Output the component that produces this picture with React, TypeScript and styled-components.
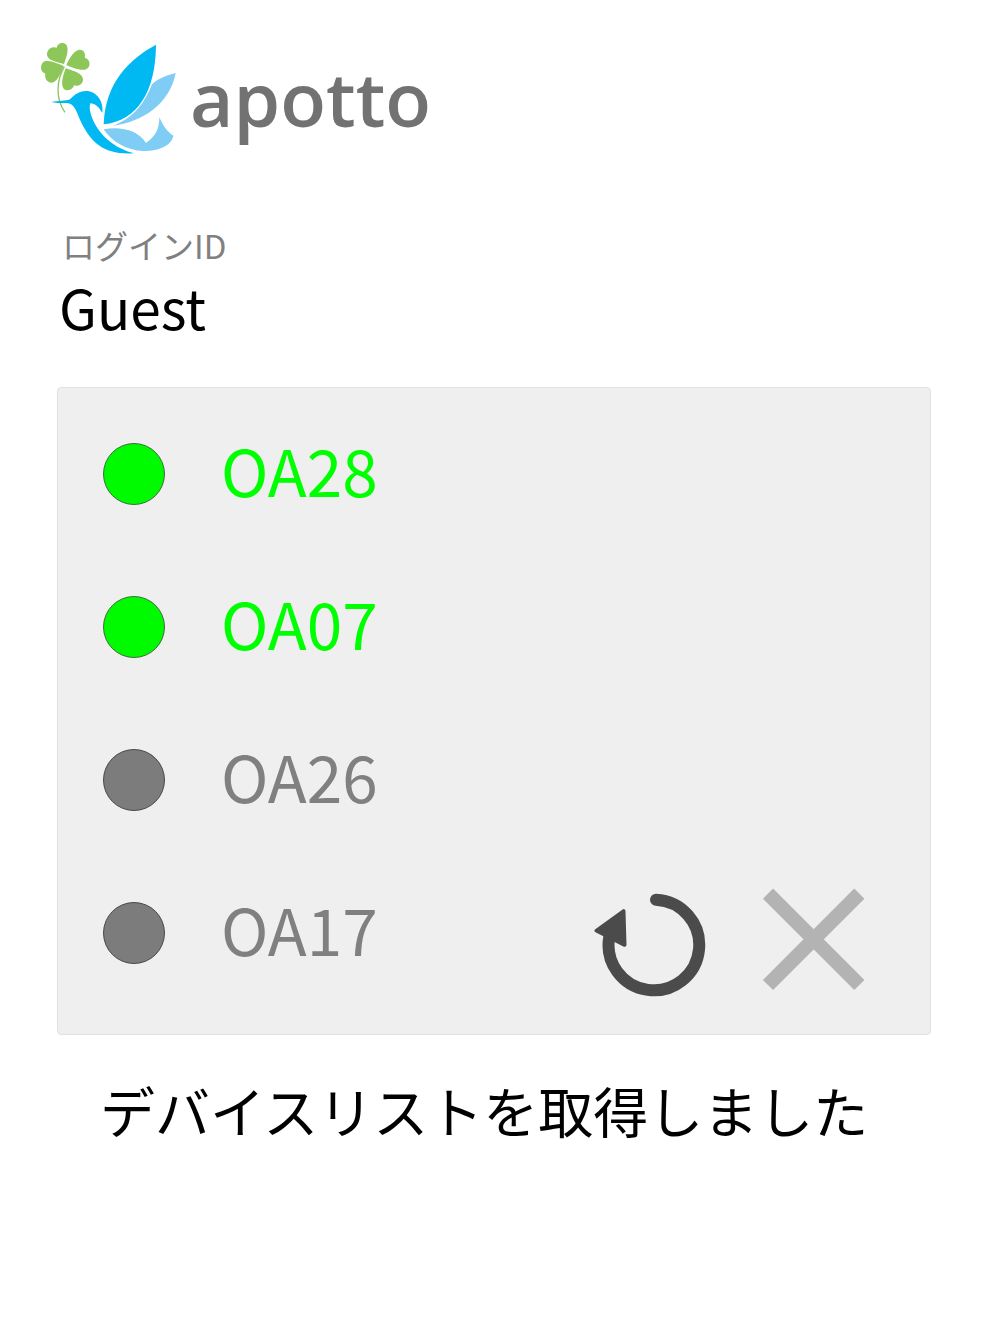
import React from "react";
import styled, { createGlobalStyle } from "styled-components";

const GlobalStyle = createGlobalStyle`
  body {
    margin: 0;
    background: #ffffff;
    color: #000000;
    font-family: "Noto Sans CJK JP", "Noto Sans", sans-serif;
  }
`;

const Page = styled.div`
  padding: 30px 69px 60px 57px;
`;

const Brand = styled.header`
  display: flex;
  align-items: flex-start;
  margin-left: -27px;
  height: 140px;
`;

const BrandMark = styled.svg`
  width: 160px;
  height: 140px;
  flex: none;
`;

const BrandName = styled.h1`
  margin: 0;
  color: #727272;
  font-family: "Open Sans", "Noto Sans", sans-serif;
  font-size: 75px;
  font-weight: 600;
  line-height: 136px;
`;

const Account = styled.dl`
  margin: 51px 0 0 2px;
`;

const AccountLabel = styled.dt`
  color: #808080;
  font-size: 33px;
  line-height: 48px;
  padding-left: 3px;
`;

const AccountName = styled.dd`
  margin: 0;
  font-size: 55px;
  font-weight: 400;
  line-height: 74px;
`;

const Panel = styled.section`
  display: flex;
  justify-content: space-between;
  align-items: flex-end;
  margin-top: 44px;
  padding: 9px 60px 25px 45px;
  border: 1px solid #e2e2e2;
  border-radius: 4px;
  background: #efefef;
`;

const DeviceList = styled.ul`
  margin: 0;
  padding: 0;
  list-style: none;
`;

const Device = styled.li<{ $online: boolean }>`
  display: flex;
  align-items: center;
  gap: 56px;
  height: 153px;
  color: ${(p) => (p.$online ? "#00ff00" : "#808080")};
`;

const DeviceName = styled.span`
  padding-bottom: 10px;
  font-size: 64px;
  line-height: 96px;
`;

const StatusDot = styled.span<{ $online: boolean }>`
  box-sizing: border-box;
  width: 62px;
  height: 62px;
  border: 1px solid ${(p) => (p.$online ? "#3c6e3c" : "#4a4a4a")};
  border-radius: 50%;
  background: ${(p) => (p.$online ? "#00fa00" : "#7c7c7c")};
`;

const Actions = styled.div`
  display: flex;
  gap: 52px;
  margin-bottom: 12px;
`;

const IconButton = styled.button`
  display: block;
  padding: 0;
  border: 0;
  background: none;
  cursor: pointer;

  svg {
    display: block;
    width: 112px;
    height: 112px;
  }
`;

const Message = styled.p`
  margin: 34px 0 0;
  padding-left: 43px;
  font-size: 55px;
  line-height: 80px;
`;

const devices = [
  { name: "OA28", online: true },
  { name: "OA07", online: true },
  { name: "OA26", online: false },
  { name: "OA17", online: false },
];

function BirdLogo() {
  return (
    <BrandMark viewBox="0 0 480 420" aria-hidden="true">
      <g fill="#8dc659">
        <path d="M102 102C85 97 50 92 51 72C52 55 68 48 80 53C82 40 97 35 107 42C120 55 108 85 102 102Z" />
        <path d="M109 105C115 90 130 62 148 59C162 58 168 72 164 83C177 85 184 103 174 114C160 128 125 112 109 105Z" />
        <path d="M107 115C125 122 158 128 159 148C159 163 145 171 132 166C129 180 112 185 101 176C90 160 102 130 107 115Z" />
        <path d="M101 108C85 102 52 85 38 98C29 110 32 125 46 131C43 145 52 159 67 158C84 153 95 125 101 108Z" />
      </g>
      <path d="M103 110C80 150 75 205 105 247" fill="none" stroke="#8dc659" strokeWidth="4" />
      <g fill="#00b9f2">
        <path d="M378 44C302 85 225 155 221 283C322 272 377 185 378 44Z" />
        <path d="M64 216C85 212 105 214 120 208C135 192 150 183 168 183C200 183 222 215 217 249C207 232 195 220 181 220C170 250 210 345 312 370C225 376 185 340 155 280C140 248 135 220 110 219C90 219 75 219 64 216Z" />
      </g>
      <g fill="#7fcdf5">
        <path d="M437 129C400 138 375 152 366 163C345 215 315 262 250 287C340 275 420 220 437 129Z" />
        <path d="M221 298C270 288 325 300 348 339C375 320 388 300 388 262C398 285 410 305 430 317C425 345 390 363 340 363C290 362 245 335 221 298Z" />
      </g>
    </BrandMark>
  );
}

export default function App() {
  return (
    <>
      <GlobalStyle />
      <Page>
        <Brand>
          <BirdLogo />
          <BrandName>apotto</BrandName>
        </Brand>
        <main>
          <Account>
            <AccountLabel>ログインID</AccountLabel>
            <AccountName>Guest</AccountName>
          </Account>
          <Panel>
            <DeviceList>
              {devices.map((d) => (
                <Device key={d.name} $online={d.online}>
                  <StatusDot $online={d.online} />
                  <DeviceName>{d.name}</DeviceName>
                </Device>
              ))}
            </DeviceList>
            <Actions>
              <IconButton type="button" aria-label="更新">
                <svg viewBox="42 45 336 336">
                  <path d="M228 89A136 136 0 1 1 88 200" fill="none" stroke="#4b4b4b" strokeWidth="36" strokeLinecap="round" />
                  <path d="M49 182L131 123L134 225Z" fill="#4b4b4b" stroke="#4b4b4b" strokeWidth="11" strokeLinejoin="round" />
                </svg>
              </IconButton>
              <IconButton type="button" aria-label="閉じる">
                <svg viewBox="534 45 336 336">
                  <path d="M564 71L838 345M838 71L564 345" fill="none" stroke="#b3b3b3" strokeWidth="43" />
                </svg>
              </IconButton>
            </Actions>
          </Panel>
          <Message role="status">デバイスリストを取得しました</Message>
        </main>
      </Page>
    </>
  );
}
